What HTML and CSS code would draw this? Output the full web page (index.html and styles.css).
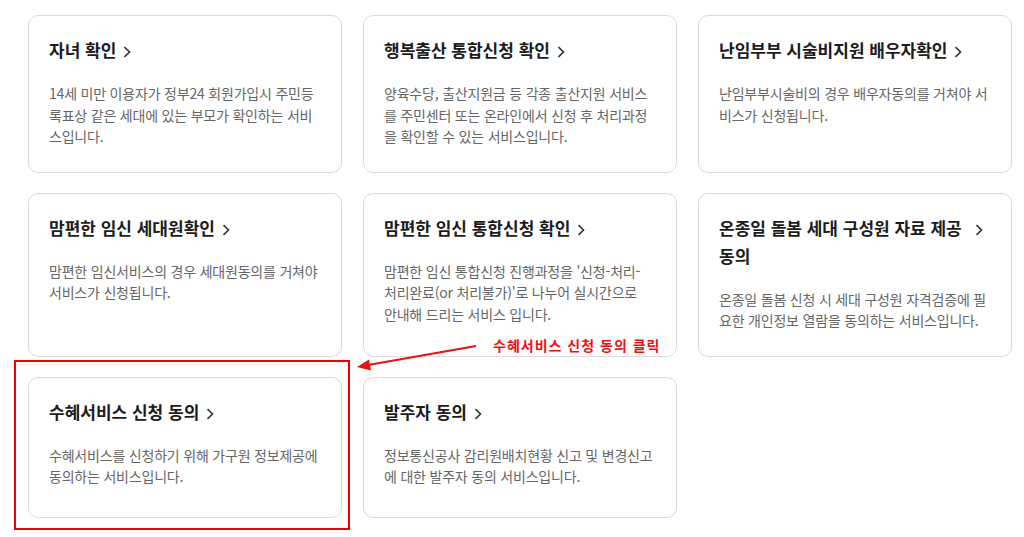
FILE: index.html
```html
<!DOCTYPE html>
<html lang="ko">
<head>
<meta charset="utf-8">
<title>서비스 목록</title>
<link rel="stylesheet" href="styles.css">
</head>
<body>
<div class="page">
  <div class="grid">
    <div class="card">
      <h3 class="title">자녀 확인<svg class="chev" viewBox="0 0 8 12" width="8" height="12"><polyline points="1.5,1.2 6.5,6 1.5,10.8"/></svg></h3>
      <p class="desc">14세 미만 이용자가 정부24 회원가입시 주민등록표상 같은 세대에 있는 부모가 확인하는 서비스입니다.</p>
    </div>
    <div class="card">
      <h3 class="title">행복출산 통합신청 확인<svg class="chev" viewBox="0 0 8 12" width="8" height="12"><polyline points="1.5,1.2 6.5,6 1.5,10.8"/></svg></h3>
      <p class="desc">양육수당, 출산지원금 등 각종 출산지원 서비스를 주민센터 또는 온라인에서 신청 후 처리과정을 확인할 수 있는 서비스입니다.</p>
    </div>
    <div class="card">
      <h3 class="title">난임부부 시술비지원 배우자확인<svg class="chev" viewBox="0 0 8 12" width="8" height="12"><polyline points="1.5,1.2 6.5,6 1.5,10.8"/></svg></h3>
      <p class="desc">난임부부시술비의 경우 배우자동의를 거쳐야 서비스가 신청됩니다.</p>
    </div>
    <div class="card">
      <h3 class="title">맘편한 임신 세대원확인<svg class="chev" viewBox="0 0 8 12" width="8" height="12"><polyline points="1.5,1.2 6.5,6 1.5,10.8"/></svg></h3>
      <p class="desc">맘편한 임신서비스의 경우 세대원동의를 거쳐야 서비스가 신청됩니다.</p>
    </div>
    <div class="card">
      <h3 class="title">맘편한 임신 통합신청 확인<svg class="chev" viewBox="0 0 8 12" width="8" height="12"><polyline points="1.5,1.2 6.5,6 1.5,10.8"/></svg></h3>
      <p class="desc">맘편한 임신 통합신청 진행과정을 '신청-처리-<span class="kw">처리완료(or</span> 처리불가)'로 나누어 실시간으로 <span class="kw">안내해</span> 드리는 서비스 입니다.</p>
    </div>
    <div class="card">
      <h3 class="title">온종일 돌봄 세대 구성원 자료 제공<svg class="chev chev-wide" viewBox="0 0 8 12" width="8" height="12"><polyline points="1.5,1.2 6.5,6 1.5,10.8"/></svg><br>동의</h3>
      <p class="desc">온종일 돌봄 신청 시 세대 구성원 자격검증에 필요한 개인정보 열람을 동의하는 서비스입니다.</p>
    </div>
    <div class="card">
      <h3 class="title">수혜서비스 신청 동의<svg class="chev" viewBox="0 0 8 12" width="8" height="12"><polyline points="1.5,1.2 6.5,6 1.5,10.8"/></svg></h3>
      <p class="desc">수혜서비스를 신청하기 위해 가구원 정보제공에 동의하는 서비스입니다.</p>
    </div>
    <div class="card">
      <h3 class="title">발주자 동의<svg class="chev" viewBox="0 0 8 12" width="8" height="12"><polyline points="1.5,1.2 6.5,6 1.5,10.8"/></svg></h3>
      <p class="desc">정보통신공사 감리원배치현황 신고 및 변경신고에 대한 발주자 동의 서비스입니다.</p>
    </div>
  </div>

  <div class="highlight"></div>
  <svg class="arrow" width="1024" height="537" viewBox="0 0 1024 537">
    <line x1="476" y1="346" x2="368" y2="365" />
    <polygon points="357,367 371,370.5 369,359.5" />
  </svg>
  <div class="note">수혜서비스 신청 동의 클릭</div>
</div>
</body>
</html>
```
FILE: styles.css
```css
* { box-sizing: border-box; }

html, body {
  margin: 0;
  padding: 0;
  background: #ffffff;
}

body {
  font-family: "Noto Sans CJK KR", "Noto Sans", sans-serif;
  width: 1024px;
  height: 537px;
  overflow: hidden;
}

.page {
  position: relative;
  width: 1024px;
  height: 537px;
}

.grid {
  display: grid;
  grid-template-columns: repeat(3, 314px);
  column-gap: 21px;
  row-gap: 20px;
  padding: 15px 0 0 28px;
  align-items: stretch;
}

.card {
  border: 1px solid #dadada;
  border-radius: 10px;
  padding: 20px 20px 24px 20px;
  min-height: 141px;
  background: #fff;
}

.title {
  margin: 0;
  font-size: 17px;
  font-weight: 700;
  line-height: 28px;
  color: #1c1c1c;
  letter-spacing: 0;
  word-break: keep-all;
}

.chev {
  display: inline-block;
  vertical-align: -1px;
  margin-left: 7px;
  fill: none;
  stroke: #333;
  stroke-width: 1.6;
}

.chev-wide { margin-left: 13px; }

.desc {
  margin: 19px 0 0 0;
  font-size: 14px;
  line-height: 21.5px;
  color: #666666;
  letter-spacing: -0.2px;
  word-break: break-all;
}

.kw {
  word-break: keep-all;
  white-space: nowrap;
}

.highlight {
  position: absolute;
  left: 14px;
  top: 360px;
  width: 336px;
  height: 170px;
  border: 2px solid #ee0000;
}

.arrow {
  position: absolute;
  left: 0;
  top: 0;
  pointer-events: none;
}

.arrow line {
  stroke: #ee1111;
  stroke-width: 2.2;
}

.arrow polygon {
  fill: #ee1111;
}

.note {
  position: absolute;
  left: 492px;
  top: 335px;
  font-size: 14px;
  line-height: 20px;
  font-weight: 700;
  color: #ee1111;
  letter-spacing: 1px;
  background: #fff;
  padding: 0 1px;
}
```
